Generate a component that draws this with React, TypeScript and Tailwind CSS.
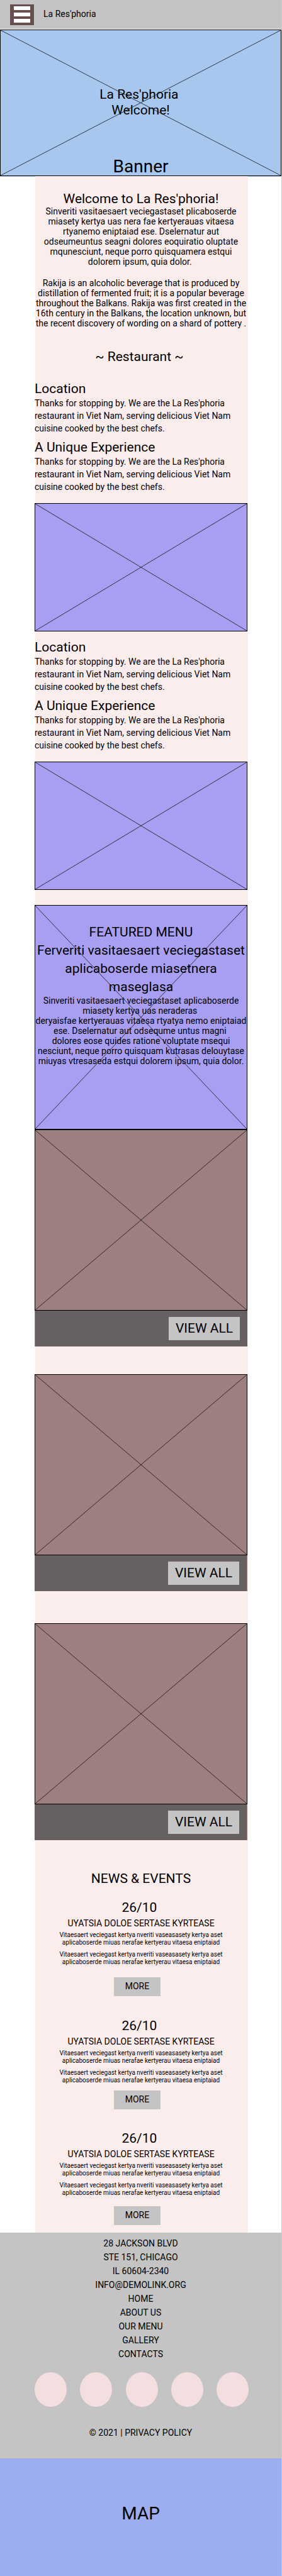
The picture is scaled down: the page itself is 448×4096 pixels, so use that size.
import type { ReactNode } from "react";

const joinLines = (lines: string[]) =>
  lines.map((line, i) => (
    <span key={i} className="block whitespace-nowrap">
      {line}
    </span>
  ));

function Cross() {
  return (
    <svg
      className="pointer-events-none absolute inset-0 size-full"
      viewBox="0 0 100 100"
      preserveAspectRatio="none"
      stroke="#111"
      strokeWidth="0.8"
      aria-hidden="true"
    >
      <line x1="0" y1="0" x2="100" y2="100" vectorEffect="non-scaling-stroke" />
      <line x1="100" y1="0" x2="0" y2="100" vectorEffect="non-scaling-stroke" />
    </svg>
  );
}

function Placeholder({ className, children }: { className: string; children?: ReactNode }) {
  return (
    <div className={`relative border border-black ${className}`}>
      <Cross />
      {children}
    </div>
  );
}

const blurb = [
  "Thanks for stopping by. We are the La Res'phoria",
  "restaurant in Viet Nam, serving delicious Viet Nam",
  "cuisine cooked by the best chefs.",
];

function About() {
  return (
    <section>
      <h3 className="text-[21px] leading-[25px]">Location</h3>
      <p className="text-sm leading-5">{joinLines(blurb)}</p>
      <h3 className="mt-2 text-[21px] leading-[25px]">A Unique Experience</h3>
      <p className="text-sm leading-5">{joinLines(blurb)}</p>
      <Placeholder className="mt-4 h-[204px] bg-[#a89ff3]" />
    </section>
  );
}

function MenuCard({ className, edge }: { className: string; edge: string }) {
  return (
    <article className={className}>
      <Placeholder className="h-72 bg-[#9e7f80]" />
      <div className={`flex h-[57px] items-start justify-end border-[#9e7f80] bg-[#676060] pt-2.5 pr-3 ${edge}`}>
        <button className="flex h-[37px] w-[113px] items-center justify-center bg-[#c4c4c4] pb-0.5 text-[21px] leading-6">
          VIEW ALL
        </button>
      </div>
    </article>
  );
}

const eventLines = [
  "Vitaesaert veciegast kertya nveriti vaseasasety kertya aset",
  "aplicaboserde miuas nerafae kertyerau vitaesa eniptaiad",
];

function EventItem({ className, buttonGap }: { className: string; buttonGap: string }) {
  return (
    <article className={`flex flex-col items-center text-center ${className}`}>
      <h3 className="text-[21px] leading-6">26/10&nbsp;</h3>
      <h4 className="mt-[3px] text-sm leading-5">UYATSIA DOLOE SERTASE KYRTEASE</h4>
      <p className="mt-[3px] text-[10px] leading-3">{joinLines(eventLines)}</p>
      <p className="mt-[7px] text-[10px] leading-3">{joinLines(eventLines)}</p>
      <button className={`mr-3 flex h-[30px] w-[74px] items-center justify-center bg-[#c4c4c4] pb-0.5 text-sm leading-5 ${buttonGap}`}>
        MORE
      </button>
    </article>
  );
}

const address = ["28 JACKSON BLVD", "STE 151, CHICAGO", "IL 60604-2340"];
const links = ["HOME", "ABOUT US", "OUR MENU", "GALLERY", "CONTACTS"];
const socials = ["Facebook", "Twitter", "Instagram", "YouTube", "Pinterest"];

export default function App() {
  return (
    <div className="border-r border-[#c9c9d2] bg-white font-['Roboto',sans-serif] text-black">
      <header className="mb-px flex h-[46px] items-center bg-[#c4c4c4] pl-4">
        <button aria-label="Open menu" className="flex h-[33px] w-[38px] flex-col items-center justify-center gap-1 bg-[#654f4f]">
          <span className="h-1.5 w-[26px] bg-white" />
          <span className="h-1.5 w-[26px] bg-white" />
          <span className="h-1.5 w-[26px] bg-white" />
        </button>
        <p className="pl-[15px] pb-0.5 text-sm leading-5">La Res'phoria</p>
      </header>

      <Placeholder className="flex h-[233px] flex-col items-center justify-between bg-[#a7c7ee] pt-[90px] text-center">
        <h1 className="text-[21px] leading-[25px]">
          La Res'phoria&nbsp;
          <br />
          Welcome!
        </h1>
        <p className="text-[28px] leading-7">Banner</p>
      </Placeholder>

      <main className="border-t border-[#a7c7ee]">
        <div className="-mt-px mr-[53px] ml-14 bg-[#fceded] pt-6 pb-3">
          <div className="mr-px -ml-px">
            <section className="text-center">
              <h2 className="text-[21px] leading-6">Welcome to La Res'phoria!</h2>
              <p className="text-sm leading-4">
                {joinLines([
                  "Sinveriti vasitaesaert veciegastaset plicaboserde",
                  "miasety kertya uas nera fae kertyerauas vitaesa",
                  "rtyanemo eniptaiad ese. Dselernatur aut",
                  "odseumeuntus seagni dolores eoquiratio oluptate",
                  "mqunesciunt, neque porro quisquamera estqui",
                  "dolorem ipsum, quia dolor.\u00a0",
                ])}
              </p>
              <p className="mt-[18px] text-sm leading-4">
                {joinLines([
                  "Rakija is an alcoholic beverage that is produced by",
                  "distillation of fermented fruit; it is a popular beverage",
                  "throughout the Balkans. Rakija was first created in the",
                  "16th century in the Balkans, the location unknown, but",
                  "the recent discovery of wording on a shard of pottery .",
                ])}
              </p>
              <h2 className="mt-[33px] text-[21px] leading-6">~ Restaurant ~&nbsp;</h2>
            </section>

            <div className="mt-[27px] flex flex-col gap-[13px]">
              <About />
              <About />
            </div>

            <Placeholder className="mt-6 h-[357px] bg-[#a89ff3] pt-7 text-center">
              <h2 className="text-[21px] leading-[29px]">
                {joinLines([
                  "FEATURED MENU",
                  "Ferveriti vasitaesaert veciegastaset",
                  "aplicaboserde miasetnera",
                  "maseglasa",
                ])}
              </h2>
              <p className="-mt-px text-sm leading-4">
                {joinLines([
                  "Sinveriti vasitaesaert veciegastaset aplicaboserde",
                  "miasety kertya uas neraderas\u00a0",
                  "deryaisfae kertyerauas vitaesa rtyatya nemo eniptaiad",
                  "ese. Dselernatur aut odsequme untus magni\u00a0",
                  "dolores eose quides ratione voluptate msequi",
                  "nesciunt, neque porro quisquam kutrasas delouytase",
                  "miuyas vtresaseda estqui dolorem ipsum, quia dolor.",
                ])}
              </p>
            </Placeholder>

            <MenuCard className="" edge="border-l" />
            <MenuCard className="mt-11" edge="border-r" />
            <MenuCard className="mt-[51px]" edge="border-r" />

            <section>
              <h2 className="mt-[49px] text-center text-[21px] leading-6">NEWS &amp; EVENTS</h2>
              <EventItem className="mt-[22px]" buttonGap="mt-[18px]" />
              <EventItem className="mt-[35px]" buttonGap="mt-2.5" />
              <EventItem className="mt-[34px]" buttonGap="mt-[15px]" />
            </section>
          </div>
        </div>
      </main>

      <footer className="bg-[#c4c4c4] pt-1.5 pb-[30px] text-center text-sm leading-[22px]">
        <address className="not-italic">
          {joinLines(address)}
          <a href="mailto:info@demolink.org" className="block">
            INFO@DEMOLINK.ORG
          </a>
        </address>
        <nav>
          {links.map((label) => (
            <a key={label} href="#" className="block">
              {label}
            </a>
          ))}
        </nav>
        <div className="mt-[18px] mr-[52px] ml-[55px] flex justify-between">
          {socials.map((label) => (
            <a key={label} href="#" aria-label={label} className="h-[55px] w-[51px] rounded-[50%] bg-[#f4dfe0]" />
          ))}
        </div>
        <p className="mt-[30px]">
          © 2021 | <a href="#">PRIVACY POLICY</a>
        </p>
      </footer>

      <section className="flex h-[187px] items-center justify-center bg-[#9cadf0] pb-3 text-[28px] leading-7">
        MAP
      </section>
    </div>
  );
}
